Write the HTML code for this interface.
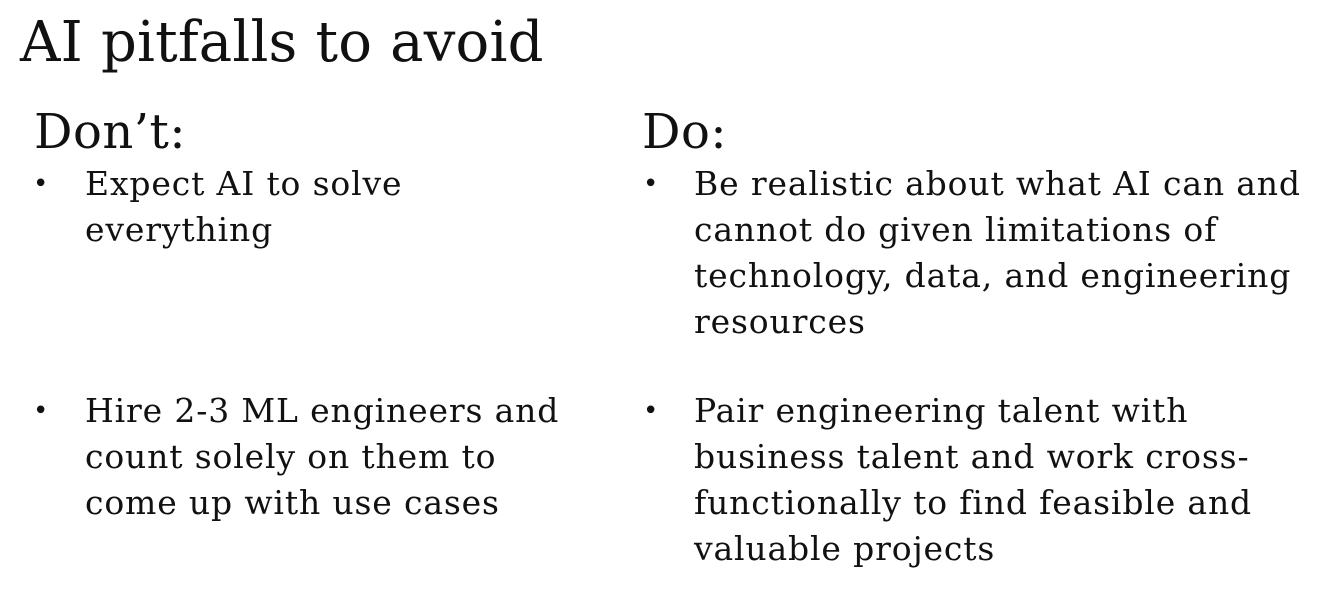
<!DOCTYPE html>
<html><head><meta charset="utf-8"><style>
html,body{margin:0;padding:0;background:#fff;}
body{width:1328px;height:596px;position:relative;overflow:hidden;font-family:"DejaVu Serif","Liberation Serif",serif;color:#111;}
.t{position:absolute;white-space:nowrap;}
.title{left:20px;top:10px;font-size:56px;line-height:66px;letter-spacing:0.2px;}
.h{font-size:48px;line-height:56px;letter-spacing:0.5px;}
.l{font-size:33px;line-height:46px;letter-spacing:0.85px;}
.b{font-size:26px;line-height:46px;}
</style></head><body>
<div class="t title">AI pitfalls to avoid</div>
<div class="t h" style="left:34px;top:104px">Don’t:</div>
<div class="t h" style="left:642px;top:104px">Do:</div>

<div class="t b" style="left:33px;top:161px">•</div>
<div class="t l" style="left:85px;top:161px">Expect AI to solve</div>
<div class="t l" style="left:85px;top:207px">everything</div>

<div class="t b" style="left:33px;top:388px">•</div>
<div class="t l" style="left:85px;top:388px">Hire 2-3 ML engineers and</div>
<div class="t l" style="left:85px;top:434px">count solely on them to</div>
<div class="t l" style="left:85px;top:480px">come up with use cases</div>

<div class="t b" style="left:643px;top:161px">•</div>
<div class="t l" style="left:694px;top:161px">Be realistic about what AI can and</div>
<div class="t l" style="left:694px;top:207px">cannot do given limitations of</div>
<div class="t l" style="left:694px;top:253px">technology, data, and engineering</div>
<div class="t l" style="left:694px;top:299px">resources</div>

<div class="t b" style="left:643px;top:388px">•</div>
<div class="t l" style="left:694px;top:388px">Pair engineering talent with</div>
<div class="t l" style="left:694px;top:434px">business talent and work cross-</div>
<div class="t l" style="left:694px;top:480px">functionally to find feasible and</div>
<div class="t l" style="left:694px;top:526px">valuable projects</div>
</body></html>
